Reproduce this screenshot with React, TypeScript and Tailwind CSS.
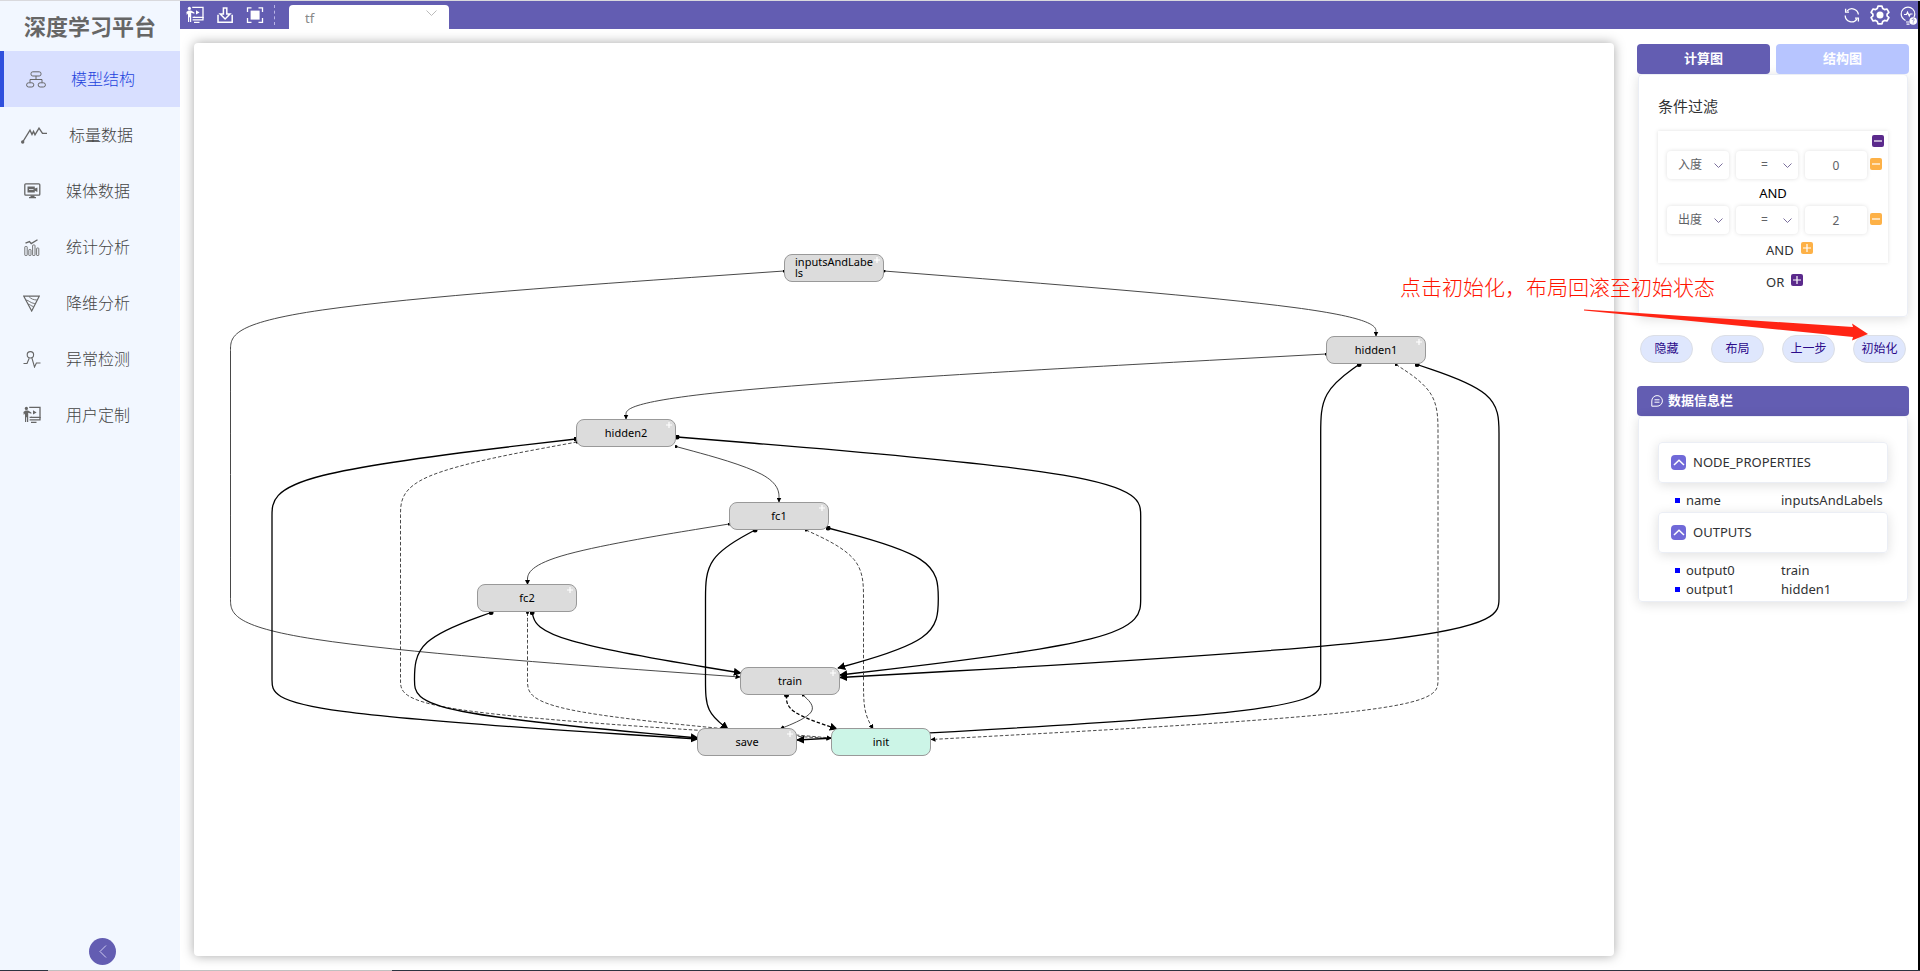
import React from "react";

type Point = [number, number];
type Kind = "thin" | "thick" | "thinDash" | "thickDash";

const ORIGIN = { x: 194, y: 43 };
const RANKS = [309.5, 350.5, 392, 433, 474.5, 516, 557, 598.5, 640, 681.5, 712];

/** Points of a vertical lane at x, through every rank between two heights. */
const lane = (x: number, from: number, to: number): Point[] =>
  RANKS.filter((y) => y >= from && y <= to).map((y) => [x, y]);

const edges: { kind: Kind; points: Point[] }[] = [
  { kind: "thin", points: [[784, 271], ...lane(230.5, 309, 640), [740, 677]] },
  { kind: "thin", points: [[884, 271], [1376, 309.5], [1376, 336]] },
  { kind: "thin", points: [[1326, 354], [626, 392], [626, 419]] },
  { kind: "thick", points: [[576, 439], ...lane(272, 474, 712), [698, 739]] },
  { kind: "thinDash", points: [[577, 442], ...lane(400.5, 474, 712), [831, 738.5]] },
  { kind: "thick", points: [[677, 437], ...lane(1140.7, 474, 640), [840, 675]] },
  { kind: "thin", points: [[676, 446.5], [779, 474.5], [779, 502]] },
  { kind: "thin", points: [[729, 524], [527.5, 557], [527.5, 584.5]] },
  { kind: "thick", points: [[755, 530], ...lane(705.5, 557, 712), [728, 729]] },
  { kind: "thinDash", points: [[806, 530], ...lane(863.5, 557, 712), [873, 729]] },
  { kind: "thick", points: [[828, 528], ...lane(938.3, 557, 640), [838, 668]] },
  { kind: "thick", points: [[491, 612.5], ...lane(414.5, 640, 712), [698, 738]] },
  { kind: "thinDash", points: [[527.5, 612.5], ...lane(527.5, 640, 712), [831, 738]] },
  { kind: "thick", points: [[532, 612.5], [540, 640], [741, 673]] },
  { kind: "thick", points: [[1417, 364.5], ...lane(1499, 392, 640), [840, 677.5]] },
  { kind: "thick", points: [[1359, 364.5], ...lane(1320.7, 392, 712), [797, 740]] },
  { kind: "thinDash", points: [[1396, 364.5], ...lane(1438, 392, 712), [931, 739.5]] },
  { kind: "thin", points: [[803, 695], [821, 712], [780, 729]] },
  { kind: "thickDash", points: [[786.5, 695], [786.5, 712], [837, 729]] },
];

const nodes = [
  { label: "inputsAndLabels", x: 784, y: 254, plus: true, wrap: true, active: false },
  { label: "hidden1", x: 1326, y: 336, plus: true, wrap: false, active: false },
  { label: "hidden2", x: 576, y: 419, plus: true, wrap: false, active: false },
  { label: "fc1", x: 729, y: 502, plus: true, wrap: false, active: false },
  { label: "fc2", x: 477, y: 584, plus: true, wrap: false, active: false },
  { label: "train", x: 740, y: 667, plus: true, wrap: false, active: false },
  { label: "save", x: 697, y: 728, plus: true, wrap: false, active: false },
  { label: "init", x: 831, y: 728, plus: false, wrap: false, active: true },
];

/** Cubic B-spline through the control points, pinned at both ends. */
function basis(p: Point[]): string {
  const pts: Point[] = [p[0], ...p, p[p.length - 1]];
  let d = `M${p[0][0]},${p[0][1]}`;
  for (let i = 1; i < pts.length - 1; i++) {
    const [ax, ay] = pts[i - 1];
    const [bx, by] = pts[i];
    const [cx, cy] = pts[i + 1];
    if (i === 1) {
      d += `L${(5 * bx + cx) / 6},${(5 * by + cy) / 6}`;
      continue;
    }
    d += `C${(2 * ax + bx) / 3},${(2 * ay + by) / 3} ${(ax + 2 * bx) / 3},${(ay + 2 * by) / 3} ${(ax + 4 * bx + cx) / 6},${(ay + 4 * by + cy) / 6}`;
  }
  const [lx, ly] = p[p.length - 1];
  return `${d}L${lx},${ly}`;
}

function Graph() {
  return (
    <div className="relative h-full w-full overflow-hidden">
      <svg className="absolute left-0 top-0" width={1420} height={912} viewBox="194 43 1420 912" fill="none" aria-hidden="true">
        <defs>
          <marker id="arrowThin" viewBox="0 0 10 10" refX="9" refY="5" markerWidth="5" markerHeight="5" markerUnits="userSpaceOnUse" orient="auto">
            <path d="M0 0L10 5L0 10z" fill="#000" />
          </marker>
          <marker id="arrowThick" viewBox="0 0 10 10" refX="9" refY="5" markerWidth="8" markerHeight="8" markerUnits="userSpaceOnUse" orient="auto">
            <path d="M0 0L10 5L0 10z" fill="#000" />
          </marker>
          <marker id="dotThin" viewBox="0 0 10 10" refX="5" refY="5" markerWidth="3" markerHeight="3" markerUnits="userSpaceOnUse">
            <circle cx="5" cy="5" r="5" fill="#000" />
          </marker>
          <marker id="dotThick" viewBox="0 0 10 10" refX="5" refY="5" markerWidth="5" markerHeight="5" markerUnits="userSpaceOnUse">
            <circle cx="5" cy="5" r="5" fill="#000" />
          </marker>
        </defs>
        {edges.map((e, i) => {
          const thick = e.kind === "thick" || e.kind === "thickDash";
          const dash = e.kind === "thinDash" || e.kind === "thickDash";
          return (
            <path
              key={i}
              d={basis(e.points)}
              stroke={thick ? "#000" : "#333"}
              strokeWidth={thick ? 1.3 : 0.9}
              strokeDasharray={dash ? "3.5 2" : undefined}
              markerStart={thick ? "url(#dotThick)" : "url(#dotThin)"}
              markerEnd={thick ? "url(#arrowThick)" : "url(#arrowThin)"}
            />
          );
        })}
      </svg>
      {nodes.map((n) => (
        <div
          key={n.label}
          className={`absolute flex h-7 w-[100px] items-center justify-center rounded-lg border border-[#999] text-[11px] text-black ${n.active ? "bg-[#ccf5e7]" : "bg-[#dcdcdc]"}`}
          style={{ left: n.x - ORIGIN.x, top: n.y - ORIGIN.y }}
        >
          {n.wrap ? (
            <span className="w-20 break-all pb-0.5 pl-px text-left leading-[11px]">{n.label}</span>
          ) : (
            <span className="leading-4">{n.label}</span>
          )}
          {n.plus && (
            <svg className="absolute right-[3px] top-0.5" width="6" height="6" viewBox="0 0 6 6" stroke="#fff" strokeWidth="1.2" aria-hidden="true">
              <path d="M3 0V6M0 3H6" />
            </svg>
          )}
        </div>
      ))}
    </div>
  );
}

function PresenterIcon({ size }: { size: number }) {
  return (
    <svg width={size} height={size} viewBox="0 0 18 18" fill="none" stroke="currentColor" strokeWidth="1.3" aria-hidden="true">
      <circle cx="3.4" cy="2.4" r="1.6" fill="currentColor" stroke="none" />
      <path d="M0.4 6L2.6 4.6H5L8.4 6.4V7.8L5.2 6.8V16H4V11.3H3.2V16H2V7.6L0.8 9z" fill="currentColor" stroke="none" />
      <path d="M6.2 1.4H17V11.4H8" />
      <path d="M10 4.2L13.6 6.4L10 8.6z" fill="currentColor" stroke="none" />
      <path d="M6.6 11.4H9M17 11V13.8M6.6 13.8H17.600M8 16.400H13.500" />
    </svg>
  );
}

const menuIcons = {
  structure: (
    <svg width="20" height="17" viewBox="0 0 20 17" fill="none" stroke="currentColor" aria-hidden="true">
      <rect x="5" y="0.8" width="10" height="4.2" rx="1.8" />
      <path d="M10 5V8.5M4 11.5V8.5H16V11.5" />
      <rect x="0.6" y="11.8" width="7.2" height="4.2" rx="2" />
      <rect x="12.2" y="11.8" width="7.2" height="4.2" rx="2" />
    </svg>
  ),
  scalar: (
    <svg width="26" height="17" viewBox="0 0 26 17" fill="none" stroke="currentColor" strokeWidth="1.4" aria-hidden="true">
      <circle cx="1.7" cy="15" r="1.7" fill="currentColor" stroke="none" />
      <path d="M1.7 15L9 3.2L11 7.5L12.5 4.5L14 7.8L18 1.2L21.5 6.4H26" />
    </svg>
  ),
  media: (
    <svg width="17" height="16" viewBox="0 0 17 16" fill="none" stroke="currentColor" strokeWidth="1.3" aria-hidden="true">
      <rect x="0.8" y="0.8" width="15" height="11.4" rx="1" />
      <path d="M3.5 3.600H10.800V5.600L13.400 4.400V9L10.800 7.800V9.400H3.5z" fill="currentColor" stroke="none" />
      <path d="M5 6.5H9.5" stroke="#f2f7ff" strokeWidth="0.8" />
      <path d="M6.5 12.4H10.5V14H12V15.3H5V14H6.5z" fill="currentColor" stroke="none" />
    </svg>
  ),
  stats: (
    <svg width="16" height="17" viewBox="0 0 16 17" fill="none" stroke="currentColor" strokeWidth="0.9" aria-hidden="true">
      <path d="M1.5 4.2L5.5 2.6L7.2 4.6L13.5 0.8" strokeWidth="1.3" />
      <rect x="0.8" y="7.5" width="2.4" height="9" rx="0.6" />
      <rect x="4.8" y="10.5" width="2.2" height="6" rx="0.6" />
      <rect x="8.6" y="6" width="2.4" height="10.5" rx="0.6" />
      <rect x="12.6" y="9" width="2.2" height="7.5" rx="0.6" />
    </svg>
  ),
  reduce: (
    <svg width="17" height="17" viewBox="0 0 17 17" fill="none" stroke="currentColor" strokeWidth="1.2" aria-hidden="true">
      <path d="M0.8 1.2H16.2L8.7 16z" />
      <path d="M2.800 5C6 5.200 7 8 11.800 8.600M5 9.200C7 9.200 8 11 10.500 11.600M6 1.500C8 4 10.500 4.800 13.800 5" strokeWidth="0.9" />
    </svg>
  ),
  anomaly: (
    <svg width="18" height="17" viewBox="0 0 18 17" fill="none" stroke="currentColor" strokeWidth="1.100" aria-hidden="true">
      <circle cx="7.4" cy="3.8" r="3.2" />
      <path d="M0.5 12.5H4L6.2 7.2M8.8 6.6L11.5 16L13.4 12H17.5" />
    </svg>
  ),
  custom: <PresenterIcon size={18} />,
};

const menu: { label: string; icon: keyof typeof menuIcons; pad: string; gap: string }[] = [
  { label: "模型结构", icon: "structure", pad: "pl-[22px]", gap: "gap-[25px]" },
  { label: "标量数据", icon: "scalar", pad: "pl-[17px]", gap: "gap-[22px]" },
  { label: "媒体数据", icon: "media", pad: "pl-5", gap: "gap-[25px]" },
  { label: "统计分析", icon: "stats", pad: "pl-5", gap: "gap-[26px]" },
  { label: "降维分析", icon: "reduce", pad: "pl-[19px]", gap: "gap-[26px]" },
  { label: "异常检测", icon: "anomaly", pad: "pl-[19px]", gap: "gap-[25px]" },
  { label: "用户定制", icon: "custom", pad: "pl-[19px]", gap: "gap-[25px]" },
];

function Sidebar() {
  return (
    <aside className="flex w-[180px] shrink-0 flex-col bg-[#f2f7ff]">
      <h1 className="flex h-[50px] items-center justify-center text-[22px] font-bold text-[#666]">深度学习平台</h1>
      <nav>
        {menu.map((m, i) => (
          <a
            key={m.label}
            href="#"
            className={`flex h-14 items-center border-l-4 text-base font-light ${m.pad} ${m.gap} ${i === 0 ? "border-[#2f4fdd] bg-[#d8dfff]" : "border-transparent"}`}
          >
            <span className="text-[#666]">{menuIcons[m.icon]}</span>
            <span className={i === 0 ? "text-[#2343dd]" : "text-[#444]"}>{m.label}</span>
          </a>
        ))}
      </nav>
      <button aria-label="收起" className="mb-[5px] ml-[89px] mt-auto flex size-[27px] items-center justify-center rounded-full bg-[#635db2] text-[#d0cdf0]">
        <svg width="8" height="13" viewBox="0 0 8 13" fill="none" stroke="currentColor" aria-hidden="true">
          <path d="M7 0.5L1 6.5L7 12.5" />
        </svg>
      </button>
    </aside>
  );
}

function TopBar() {
  return (
    <header className="flex h-7 shrink-0 items-center bg-[#635db2] text-white">
      <div className="flex items-center gap-3 pl-1.5">
        <button aria-label="演示" className="size-[18px]">
          <PresenterIcon size={18} />
        </button>
        <button aria-label="下载" className="size-[18px]">
          <svg width="18" height="18" viewBox="0 0 18 18" fill="none" stroke="currentColor" strokeWidth="1.5" aria-hidden="true">
            <path d="M7.4 2H10.8V8H14L9.1 13L4.2 8H7.4z" />
            <path d="M2.8 9.5H2V16.2H16.2V9.5H15.4" />
          </svg>
        </button>
        <button aria-label="适应屏幕" className="size-[18px]">
          <svg width="18" height="18" viewBox="0 0 18 18" fill="none" stroke="currentColor" strokeWidth="1.3" aria-hidden="true">
            <path d="M1.5 6V1.8H5.5M12.5 1.8H16.5V6M16.5 12V16.3H12.5M5.5 16.3H1.5V12" />
            <rect x="4.6" y="4.6" width="9" height="9" fill="currentColor" stroke="none" />
          </svg>
        </button>
        <span className="-ml-0.5 h-5 border-l border-dashed border-[#b9b5e6]" />
      </div>
      <div className="relative ml-[14px] h-6 w-40 self-end rounded-t bg-white">
        <select aria-label="数据集" className="h-full w-full appearance-none bg-transparent px-4 pt-1 text-[13px] text-[#888] outline-none" defaultValue="tf">
          <option>tf</option>
        </select>
        <svg className="pointer-events-none absolute right-3 top-[5px]" width="11" height="6" viewBox="0 0 11 6" fill="none" stroke="#bbb" aria-hidden="true">
          <path d="M0.5 0.5L5.5 5.5L10.5 0.5" />
        </svg>
      </div>
      <div className="ml-auto flex items-center gap-2.5">
        <button aria-label="刷新" className="size-4">
          <svg width="16" height="16" viewBox="0 0 16 16" fill="none" stroke="currentColor" strokeWidth="1.3" aria-hidden="true">
            <path d="M3 4.2A6.4 6.4 0 0 1 14.4 7.5M1.2 8.5A6.4 6.4 0 0 0 13 11.8" />
            <path d="M1.6 1.8V5.2H5M14.4 14.6V11.2H11" />
          </svg>
        </button>
        <button aria-label="设置" className="size-5">
          <svg width="20" height="20" viewBox="0 0 20 20" fill="none" stroke="currentColor" strokeWidth="1.7" strokeLinejoin="round" aria-hidden="true">
            <path d="M8 1.2h4l.7 2.4 1.8 1 2.4-.6 2 3.4-1.8 1.7v1.8l1.8 1.7-2 3.4-2.4-.6-1.8 1-.7 2.4H8l-.7-2.4-1.8-1-2.4.6-2-3.4 1.8-1.7V9.100L1.100 7.400l2-3.400 2.400.6 1.800-1z" />
            <circle cx="10" cy="10" r="3.500" fill="currentColor" stroke="none" />
          </svg>
        </button>
        <button aria-label="帮助" className="size-[18px]">
          <svg width="18" height="20" viewBox="0 0 18 20" fill="none" stroke="currentColor" strokeWidth="1.2" aria-hidden="true">
            <path d="M5.500 14.500C3 13 1.200 10.800 1.200 8A6.800 6.800 0 0 1 14.800 8C14.800 9 14.500 10 14 11" />
            <path d="M4 8.500H6.500L7.500 6.200L9.300 10L10.200 8H12.500" />
            <path d="M6 16H9.500M6.500 18.200H9.500" />
            <circle cx="13.200" cy="15" r="3.800" fill="currentColor" stroke="none" />
            <path d="M12.200 14C12.200 12.500 14.300 12.600 14.200 14C14.100 14.800 13.300 14.800 13.200 15.700M13.200 16.500V17.300" stroke="#635db2" strokeWidth="0.800" />
          </svg>
        </button>
      </div>
    </header>
  );
}

function SquareButton({ tone, sign }: { tone: "purple" | "orange"; sign: "+" | "-" }) {
  return (
    <button
      aria-label={sign === "+" ? "添加条件" : "删除条件"}
      className={`flex size-3 items-center justify-center rounded-xs text-white ${tone === "purple" ? "bg-[#5b2a8c]" : "bg-[#fdb147]"}`}
    >
      <svg width="8" height="8" viewBox="0 0 8 8" stroke="currentColor" strokeWidth="1.200" aria-hidden="true">
        <path d={sign === "+" ? "M0 4H8M4 0V8" : "M0 4H8"} />
      </svg>
    </button>
  );
}

function Picker({ label, value }: { label: string; value: string }) {
  return (
    <div className="relative h-7 flex-1 rounded-sm shadow-[0_0_4px_rgba(0,0,0,0.13)]">
      <select aria-label={label} defaultValue={value} className={`h-full w-full appearance-none bg-transparent text-xs text-[#606266] outline-none ${value === "=" ? "pl-[25px]" : "pl-[11px]"}`}>
        <option>{value}</option>
      </select>
      <svg className="pointer-events-none absolute right-[6px] top-3" width="9" height="5" viewBox="0 0 9 5" fill="none" stroke="#7b6f9c" aria-hidden="true">
        <path d="M0.500 0.500L4.500 4.500L8.500 0.500" />
      </svg>
    </div>
  );
}

function Condition({ field, value }: { field: string; value: string }) {
  return (
    <div className="flex items-center pl-[9px] pr-1.5">
      <div className="flex flex-1 gap-[7px]">
        <Picker label="字段" value={field} />
        <Picker label="运算符" value="=" />
        <input
          aria-label="数值"
          defaultValue={value}
          className="h-7 w-0 flex-1 rounded-sm text-center text-xs text-[#606266] shadow-[0_0_4px_rgba(0,0,0,0.13)] outline-none"
        />
      </div>
      <span className="ml-[3px] pb-0.5">
        <SquareButton tone="orange" sign="-" />
      </span>
    </div>
  );
}

const cardShadow = "shadow-[0_2px_12px_rgba(0,0,0,0.13)]";

function InfoGroup({ title, rows }: { title: string; rows: [string, string][] }) {
  return (
    <section>
      <button className={`flex h-[41px] w-full items-center gap-[7px] rounded-sm border border-[#ebeef5] px-3 text-[13px] text-[#303133] ${cardShadow}`}>
        <span className="flex size-[15px] items-center justify-center rounded bg-[#7069d8]">
          <svg width="12" height="7" viewBox="0 0 12 7" fill="none" stroke="#fff" strokeWidth="1.500" aria-hidden="true">
            <path d="M1 6L6 1.200L11 6" />
          </svg>
        </span>
        {title}
      </button>
      <dl className="pb-0.5 pt-2 text-[13px] leading-[19px] text-[#303133]">
        {rows.map(([k, v]) => (
          <div key={k} className="flex items-center pl-[17px]">
            <span className="mr-1.5 size-[5px] bg-[#0000ff]" />
            <dt className="w-[95px]">{k}</dt>
            <dd>{v}</dd>
          </div>
        ))}
      </dl>
    </section>
  );
}

function RightPanel() {
  return (
    <aside className="w-[272px] shrink-0 pt-[15px]">
      <div className="flex gap-1.5 text-[13px] font-bold text-white" role="tablist">
        <button role="tab" aria-selected="true" className="h-[30px] flex-1 rounded-sm bg-[#635db2]">计算图</button>
        <button role="tab" aria-selected="false" className="h-[30px] flex-1 rounded-sm bg-[#b7c5ff]">结构图</button>
      </div>
      <div className={`mx-px h-[243px] rounded-sm border border-[#ebeef5] px-[19px] ${cardShadow}`}>
        <h2 className="pt-5 text-[15px] leading-[22px] text-[#303133]">条件过滤</h2>
        <div className="mt-3.5 h-[132px] shadow-[0_0_4px_rgba(0,0,0,0.13)]">
          <div className="flex h-5 items-center justify-end pr-1">
            <SquareButton tone="purple" sign="-" />
          </div>
          <Condition field="入度" value="0" />
          <p className="h-[27px] text-center text-[13px] leading-[29px] text-black">AND</p>
          <Condition field="出度" value="2" />
          <div className="flex items-start gap-[7px] pl-[108px] pt-[5px] text-[13px] leading-[22px] text-[#303133]">
            AND
            <span className="pt-[3px]">
              <SquareButton tone="orange" sign="+" />
            </span>
          </div>
        </div>
        <div className="flex items-start gap-[7px] pl-[108px] pt-2 text-[13px] leading-[22px] text-[#303133]">
          OR
          <span className="pt-[3px]">
            <SquareButton tone="purple" sign="+" />
          </span>
        </div>
      </div>
      <div className="mt-[18px] flex justify-between px-[3px] text-xs text-[#2b0a8a]">
        {["隐藏", "布局", "上一步", "初始化"].map((t) => (
          <button key={t} className="h-7 w-[53px] rounded-full border border-[#dcdfe6] bg-[#dfe7fd]">
            {t}
          </button>
        ))}
      </div>
      <h2 className="mt-[23px] flex h-[30px] items-center gap-[5px] rounded-sm bg-[#635db2] px-3.5 text-[13px] font-bold text-white">
        <svg width="12" height="12" viewBox="0 0 12 12" fill="none" stroke="currentColor" aria-hidden="true">
          <path d="M0.800 11.200V6A5.300 5.300 0 1 1 6 11.200z" />
          <path d="M3.500 4.800H8.500M3.500 7.200H8.500" />
        </svg>
        数据信息栏
      </h2>
      <div className={`mx-px rounded-sm border border-[#ebeef5] px-[19px] pt-[25px] ${cardShadow}`}>
        <InfoGroup title="NODE_PROPERTIES" rows={[["name", "inputsAndLabels"]]} />
        <InfoGroup title="OUTPUTS" rows={[["output0", "train"], ["output1", "hidden1"]]} />
      </div>
    </aside>
  );
}

function Annotation() {
  return (
    <div className="pointer-events-none absolute right-[44px] top-[272px] w-[476px]">
      <p className="text-[21px] font-light leading-7 text-[#ff1400]">点击初始化，布局回滚至初始状态</p>
      <svg className="ml-[184px] mt-1" width="286" height="36" viewBox="0 0 286 36" aria-hidden="true">
        <path d="M0 4.500L269 22L268 18.500L284 29L268 35.500L269 32L0 5.500Z" fill="#ff2414" />
      </svg>
    </div>
  );
}

export default function App() {
  return (
    <div className="relative flex min-h-screen flex-col overflow-hidden border-t border-[#d9d9dd] bg-white font-['Noto_Sans','Noto_Sans_CJK_SC',sans-serif]">
      <div className="flex flex-1 border-r-2 border-black">
        <Sidebar />
        <div className="flex min-w-0 flex-1 flex-col">
          <TopBar />
          <div className="flex flex-1">
            <main className="min-w-0 flex-1 pb-3.5 pl-3.5 pr-[23px] pt-3.5">
              <div className="h-full rounded-sm bg-white shadow-[0_0_12px_rgba(0,0,0,0.35)]">
                <Graph />
              </div>
            </main>
            <div className="mr-[9px] flex">
              <RightPanel />
            </div>
          </div>
        </div>
      </div>
      <footer className="flex h-px bg-[#2c3440]">
        <span className="ml-12 w-[344px] bg-[#c0c0c0]" />
      </footer>
      <Annotation />
    </div>
  );
}
